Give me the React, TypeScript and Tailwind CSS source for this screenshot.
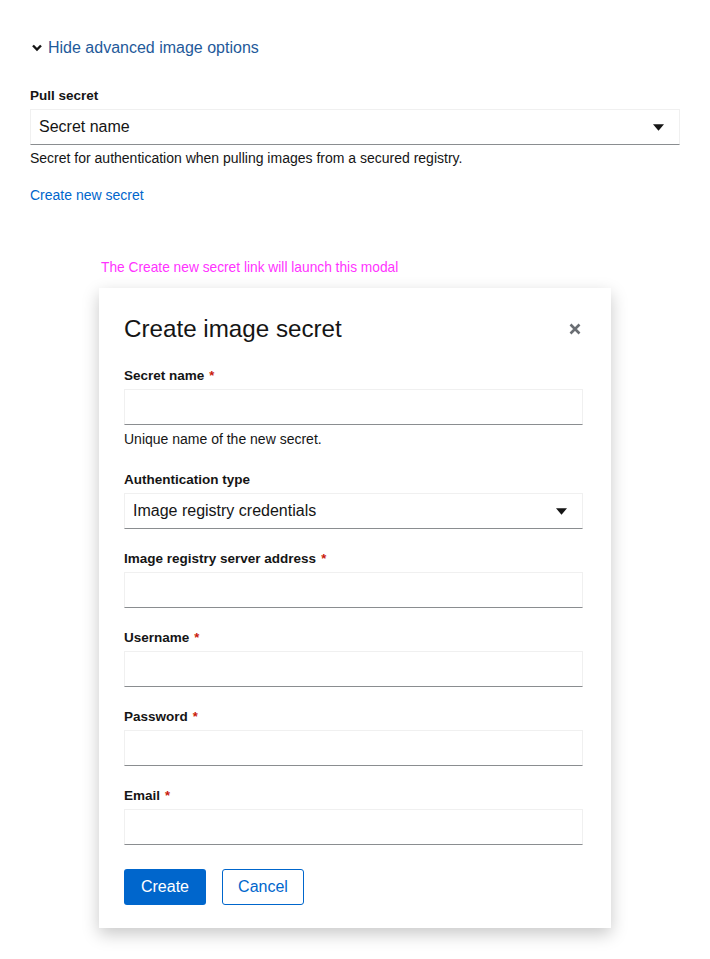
import React from "react";

const font = { fontFamily: '"Liberation Sans", Arial, sans-serif' };

function Caret() {
  return (
    <svg width="11" height="7" viewBox="0 0 10 6" className="shrink-0">
      <path d="M0 0 L10 0 L5 6 Z" fill="#151515" />
    </svg>
  );
}

function Label({ text, required }: { text: string; required?: boolean }) {
  return (
    <div className="h-[20px] leading-[20px] text-[13.5px] font-bold text-[#151515] mb-[3px]">
      {text}
      {required && <span className="text-[#c9190b] ml-[5px] text-[13px] align-top">*</span>}
    </div>
  );
}

function Input() {
  return (
    <div className="h-[36px] w-full border border-[#f0f0f0] border-b-[#8a8d90] bg-white" />
  );
}

function Select({ value }: { value: string }) {
  return (
    <div className="h-[36px] w-full border border-[#f0f0f0] border-b-[#8a8d90] bg-white flex items-center justify-between pl-[8px] pr-[15px]">
      <span className="text-[16px] text-[#151515]">{value}</span>
      <Caret />
    </div>
  );
}

export default function App() {
  return (
    <div className="w-[710px] h-[959px] bg-white relative" style={font}>
      <div className="pt-[36px] px-[30px]">
        <div className="flex items-center h-[24px] pl-[2px]">
          <svg width="10" height="8" viewBox="0 0 10 8" className="mr-[6px]">
            <path d="M1 1.5 L5 5.5 L9 1.5" stroke="#151515" strokeWidth="2.4" fill="none" />
          </svg>
          <span className="text-[16px] text-[#1f5a9a]">Hide advanced image options</span>
        </div>
        <div className="mt-[26px]">
          <div className="h-[20px] leading-[20px] text-[13.5px] font-bold text-[#151515] mb-[3px]">Pull secret</div>
          <Select value="Secret name" />
          <div className="mt-[3px] text-[14px] leading-[20px] text-[#151515]">
            Secret for authentication when pulling images from a secured registry.
          </div>
          <div className="mt-[17px] text-[14px] leading-[20px] text-[#0066cc]">Create new secret</div>
        </div>
      </div>

      <div className="pl-[101px] mt-[53px] text-[13.75px] leading-[20px] text-[#ff33ff]">
        The Create new secret link will launch this modal
      </div>

      <div className="ml-[99px] mt-[10px] w-[512px] bg-white shadow-[0_6px_16px_rgba(0,0,0,0.22)] pl-[25px] pr-[28px] pt-[25px] pb-[23px]">
        <div className="flex items-center justify-between h-[32px]">
          <span className="text-[24.2px] text-[#151515]">Create image secret</span>
          <svg width="12" height="12" viewBox="0 0 12 12" className="mr-[2px]">
            <path d="M1.5 1.5 L10.5 10.5 M10.5 1.5 L1.5 10.5" stroke="#6a6e73" strokeWidth="2.6" />
          </svg>
        </div>

        <div className="mt-[21px]">
          <Label text="Secret name" required />
          <Input />
          <div className="mt-[4px] text-[14px] leading-[20px] text-[#151515]">Unique name of the new secret.</div>
        </div>

        <div className="mt-[21px]">
          <Label text="Authentication type" />
          <Select value="Image registry credentials" />
        </div>

        <div className="mt-[20px]">
          <Label text="Image registry server address" required />
          <Input />
        </div>
        <div className="mt-[20px]">
          <Label text="Username" required />
          <Input />
        </div>
        <div className="mt-[20px]">
          <Label text="Password" required />
          <Input />
        </div>
        <div className="mt-[20px]">
          <Label text="Email" required />
          <Input />
        </div>

        <div className="mt-[24px] flex gap-[16px]">
          <button className="h-[36px] w-[82px] rounded-[3px] bg-[#0066cc] text-white text-[16px]">Create</button>
          <button className="h-[36px] w-[82px] rounded-[3px] border border-[#0066cc] text-[#0066cc] text-[16px] bg-white">Cancel</button>
        </div>
      </div>
    </div>
  );
}
